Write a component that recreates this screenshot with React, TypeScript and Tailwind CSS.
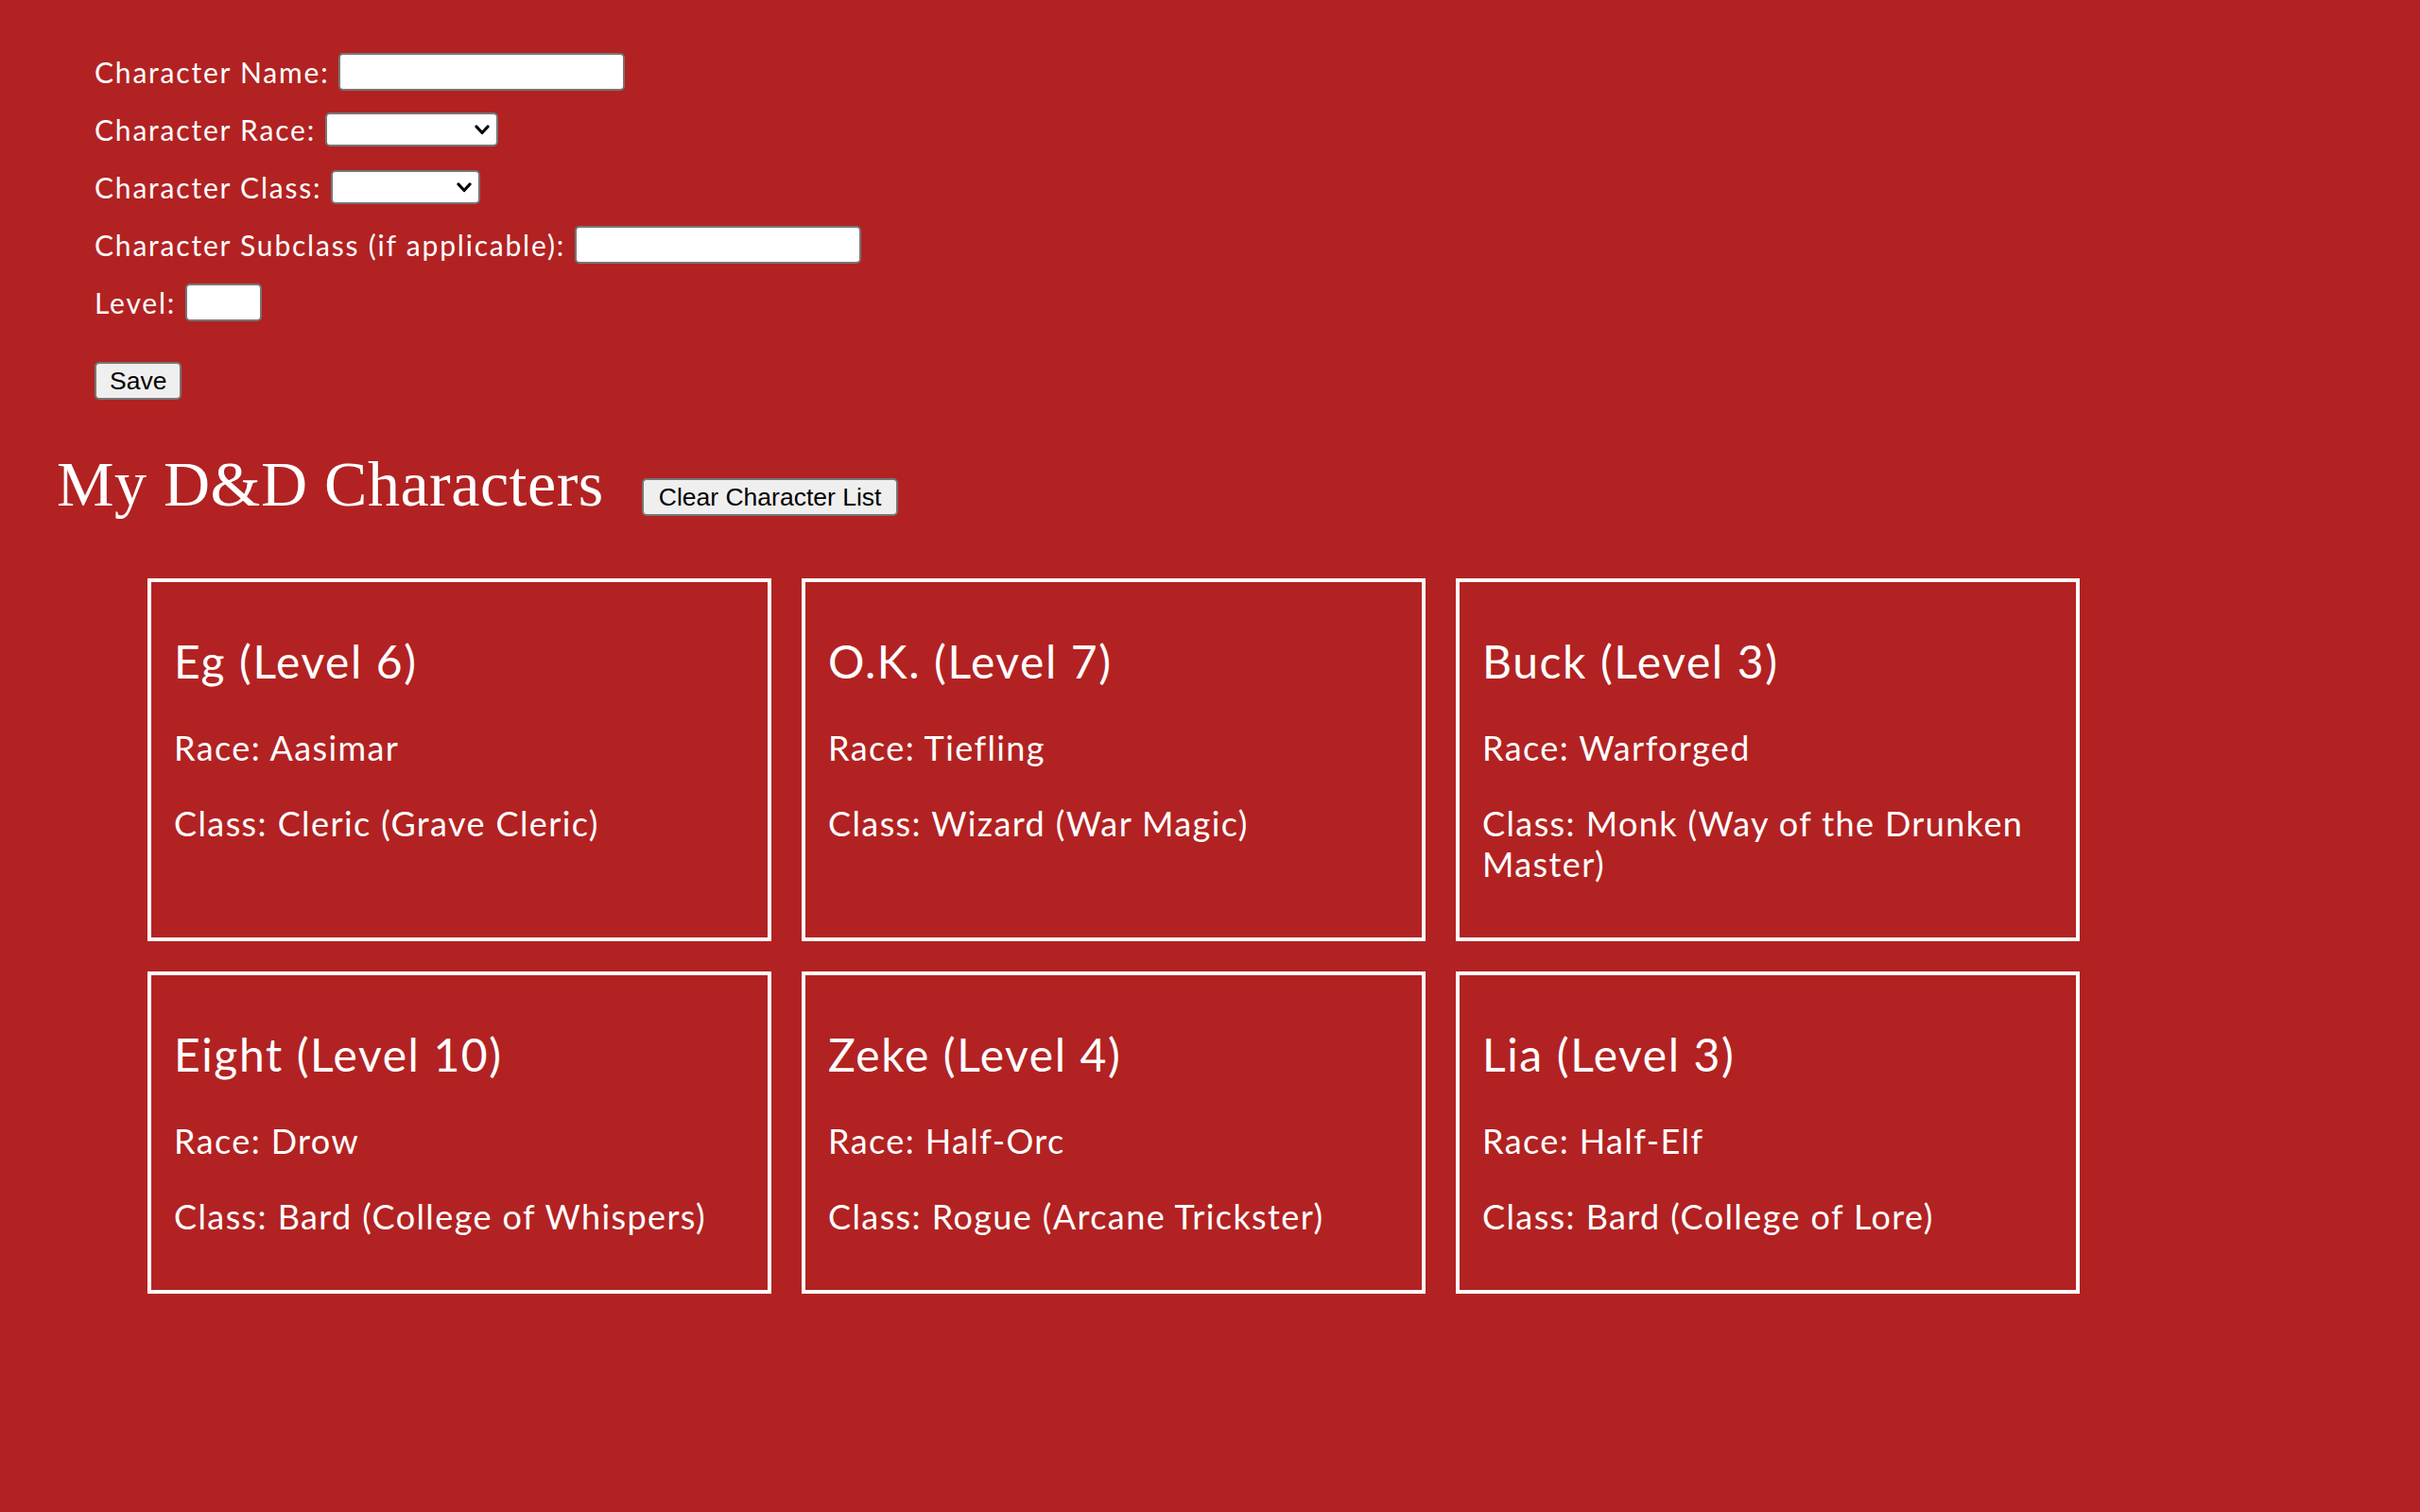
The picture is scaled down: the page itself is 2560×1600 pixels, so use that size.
import { useState } from 'react';

interface Character {
  name: string;
  level: number;
  race: string;
  charClass: string;
  subclass: string;
}

const characters: Character[] = [
  { name: 'Eg', level: 6, race: 'Aasimar', charClass: 'Cleric', subclass: 'Grave Cleric' },
  { name: 'O.K.', level: 7, race: 'Tiefling', charClass: 'Wizard', subclass: 'War Magic' },
  { name: 'Buck', level: 3, race: 'Warforged', charClass: 'Monk', subclass: 'Way of the Drunken Master' },
  { name: 'Eight', level: 10, race: 'Drow', charClass: 'Bard', subclass: 'College of Whispers' },
  { name: 'Zeke', level: 4, race: 'Half-Orc', charClass: 'Rogue', subclass: 'Arcane Trickster' },
  { name: 'Lia', level: 3, race: 'Half-Elf', charClass: 'Bard', subclass: 'College of Lore' },
];

const Chevron = () => (
  <svg width="16" height="11" viewBox="0 0 16 11" className="shrink-0">
    <polyline points="2,2 8,8.5 14,2" fill="none" stroke="black" strokeWidth="3.2" strokeLinecap="round" strokeLinejoin="round" />
  </svg>
);

const FakeSelect = ({ width }: { width: string }) => (
  <div className={`${width} h-[36px] bg-white border-2 border-[#767676] rounded-[5px] flex items-center justify-end pr-[7px]`}>
    <Chevron />
  </div>
);

const CharacterCard = ({ c }: { c: Character }) => (
  <div className="border-4 border-white px-[24px] pt-[55px] pb-[56px] text-white">
    <h2 className="text-[48px] leading-[57px] tracking-[1.6px]">
      {c.name} (Level {c.level})
    </h2>
    <p className="mt-[42px] text-[36px] leading-[43px] tracking-[1.4px]">Race: {c.race}</p>
    <p className="mt-[37px] text-[36px] leading-[43px] tracking-[1.4px]">
      Class: {c.charClass} ({c.subclass})
    </p>
  </div>
);

const App = () => {
  const [name, setName] = useState('');
  const [subclass, setSubclass] = useState('');
  const [level, setLevel] = useState('');

  const inputClass = 'h-[40px] bg-white border-2 border-[#767676] rounded-[5px] px-2 text-[26px] text-black outline-none';
  const buttonClass =
    "h-[40px] bg-[#efefef] border-2 border-[#767676] rounded-[5px] text-black text-[26.5px] leading-[30px] tracking-normal font-['Liberation_Sans',Arial,sans-serif]";

  return (
    <div className="min-h-screen bg-[#b22222] pt-[56px] pl-[60px] pb-20 font-['Lato','Open_Sans',sans-serif] text-white">
      <div className="flex flex-col gap-[21px] pl-[40px] text-[30px] tracking-[1.8px]">
        <div className="flex items-center h-[40px] gap-[10px]">
          <label htmlFor="char-name">Character Name:</label>
          <input id="char-name" className={`${inputClass} w-[303px]`} value={name} onChange={(e) => setName(e.target.value)} />
        </div>
        <div className="flex items-center h-[40px] gap-[10px]">
          <span>Character Race:</span>
          <FakeSelect width="w-[183px]" />
        </div>
        <div className="flex items-center h-[40px] gap-[10px]">
          <span>Character Class:</span>
          <FakeSelect width="w-[158px]" />
        </div>
        <div className="flex items-center h-[40px] gap-[10px]">
          <label htmlFor="char-subclass">Character Subclass (if applicable):</label>
          <input id="char-subclass" className={`${inputClass} w-[303px]`} value={subclass} onChange={(e) => setSubclass(e.target.value)} />
        </div>
        <div className="flex items-center h-[40px] gap-[10px]">
          <label htmlFor="char-level">Level:</label>
          <input id="char-level" className={`${inputClass} w-[81px]`} value={level} onChange={(e) => setLevel(e.target.value)} />
        </div>
        <div className="mt-[22px] flex">
          <button type="button" className={`${buttonClass} px-[14px]`}>Save</button>
        </div>
      </div>

      <div className="mt-[50px] flex items-baseline">
        <h1 className="text-[68px] leading-[78px] tracking-[0.5px] font-['Liberation_Serif','Times_New_Roman',serif]">My D&amp;D Characters</h1>
        <button type="button" className={`${buttonClass} px-[16px] ml-[40px]`}>Clear Character List</button>
      </div>

      <div className="mt-[61px] ml-[96px] grid grid-cols-[repeat(3,660px)] gap-[32px]">
        {characters.map((c) => (
          <CharacterCard key={c.name} c={c} />
        ))}
      </div>
    </div>
  );
};

export default App;
